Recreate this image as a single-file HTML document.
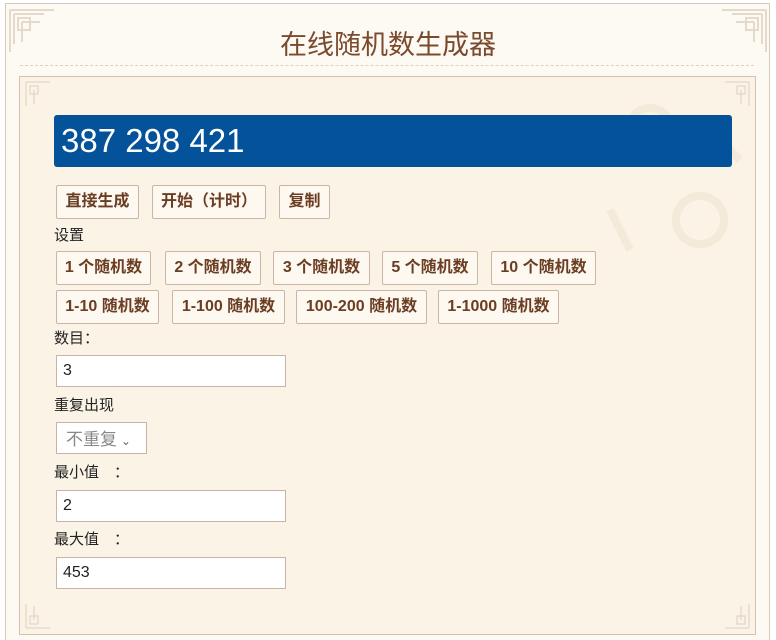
<!DOCTYPE html>
<html><head><meta charset="utf-8"><style>
*{box-sizing:border-box;margin:0;padding:0}
html,body{width:776px;height:640px;overflow:hidden}
body{background:#fff;position:relative;font-family:"Liberation Sans","Noto Sans CJK SC",sans-serif}
.outer{position:absolute;left:5px;top:3px;width:765px;height:637px;border:1px solid #d9c8bc;border-bottom:none;background:#fdf9f3}
.title{position:absolute;left:0;width:776px;top:23px;text-align:center;font-size:27px;color:#7b4a2c;font-family:"Noto Sans CJK SC",sans-serif}
.dash{position:absolute;left:20px;width:734px;top:65px;border-top:1px dashed #e2cfc0}
.panel{position:absolute;left:19px;top:76px;width:737px;height:559px;border:1px solid #d6c0b0;background:#fbf3e6}
.blue{position:absolute;left:54px;top:115px;width:678px;height:52px;background:#03529a;border-radius:3px;color:#fff;font-size:33px;padding-left:7px;line-height:52px}
.b{position:absolute;height:34px;border:1px solid #cbb5a4;background:#fdf8f0;color:#6b3d22;font-weight:bold;font-size:16px;line-height:32px;text-align:center;border-radius:2px;font-family:"Liberation Sans","Noto Sans CJK SC",sans-serif}
.l{position:absolute;left:54px;font-size:15px;color:#222;font-family:"Noto Sans CJK SC",sans-serif}
.in{position:absolute;left:56px;width:230px;height:32px;border:1px solid #c9b3a6;background:#fff;font-size:16px;padding-left:6px;line-height:30px;color:#222}
</style></head><body>
<div class="outer"></div>
<svg style="position:absolute;left:8px;top:8px" width="48" height="46"><path d="M2 2h44M2 2v42M6 6h30M6 6v30M10 10h12v12h-12zM14 14v20M14 14h18" stroke="#e5d9cc" stroke-width="2" fill="none"/></svg>
<svg style="position:absolute;left:720px;top:8px" width="48" height="46"><path d="M46 2h-44M46 2v42M42 6h-30M42 6v30M38 10h-12v12h12zM34 14v20M34 14h-18" stroke="#e5d9cc" stroke-width="2" fill="none"/></svg>
<div class="title">在线随机数生成器</div>
<div class="dash"></div>
<div class="panel"></div>
<svg style="position:absolute;left:570px;top:80px" width="180" height="180"><g fill="none" stroke="#f4ead9" stroke-width="8"><circle cx="80" cy="50" r="22"/><circle cx="130" cy="140" r="24"/><path d="M40 130l20 40M150 60l20 20"/></g></svg>
<svg style="position:absolute;left:25px;top:81px" width="26" height="26"><path d="M1 1h24M1 1v24M5 5h8v8h-8zM9 9v14" stroke="#ddd0c2" fill="none"/></svg>
<svg style="position:absolute;left:724px;top:81px" width="26" height="26"><path d="M25 1h-24M25 1v24M21 5h-8v8h8zM17 9v14" stroke="#ddd0c2" fill="none"/></svg>
<svg style="position:absolute;left:25px;top:603px" width="26" height="26"><path d="M1 25h24M1 25v-24M5 21h8v-8h-8zM9 17v-14" stroke="#ddd0c2" fill="none"/></svg>
<svg style="position:absolute;left:724px;top:603px" width="26" height="26"><path d="M25 25h-24M25 25v-24M21 21h-8v-8h8zM17 17v-14" stroke="#ddd0c2" fill="none"/></svg>
<div class="blue">387 298 421</div>
<div class="b" style="left:56px;top:185px;width:83px">直接生成</div>
<div class="b" style="left:152px;top:185px;width:114px">开始（计时）</div>
<div class="b" style="left:279px;top:185px;width:51px">复制</div>
<div class="l" style="top:224px">设置</div>
<div class="b" style="left:56px;top:251px;width:95px">1 个随机数</div>
<div class="b" style="left:165px;top:251px;width:96px">2 个随机数</div>
<div class="b" style="left:273px;top:251px;width:97px">3 个随机数</div>
<div class="b" style="left:382px;top:251px;width:96px">5 个随机数</div>
<div class="b" style="left:491px;top:251px;width:105px">10 个随机数</div>
<div class="b" style="left:56px;top:290px;width:103px">1-10 随机数</div>
<div class="b" style="left:172px;top:290px;width:113px">1-100 随机数</div>
<div class="b" style="left:296px;top:290px;width:131px">100-200 随机数</div>
<div class="b" style="left:438px;top:290px;width:121px">1-1000 随机数</div>
<div class="l" style="top:327px">数目：</div>
<div class="in" style="top:355px">3</div>
<div class="l" style="top:394px">重复出现</div>
<div class="in" style="top:422px;width:91px;color:#888;font-family:'Noto Sans CJK SC',sans-serif;font-size:17px;padding-left:9px">不重复 <span style="font-size:12px;color:#666">&#8964;</span></div>
<div class="l" style="top:461px">最小值　：</div>
<div class="in" style="top:490px">2</div>
<div class="l" style="top:528px">最大值　：</div>
<div class="in" style="top:557px">453</div>
</body></html>
